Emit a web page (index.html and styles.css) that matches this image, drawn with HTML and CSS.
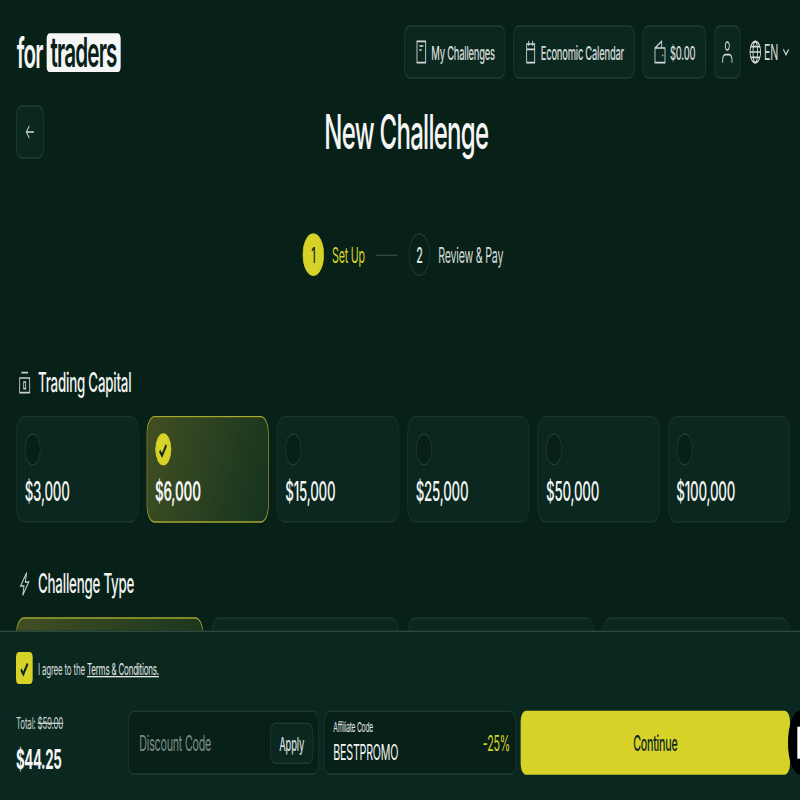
FILE: index.html
```html
<!DOCTYPE html>
<html lang="en">
<head>
  <meta charset="UTF-8">
  <title>New Challenge</title>
  <link rel="stylesheet" href="styles.css">
</head>
<body>
  <div class="page">
    <!-- Top navigation -->
    <header class="topbar">
      <div class="logo">for <span class="logo-box">traders</span></div>
      <nav class="nav">
        <a class="nav-btn">
          <svg class="icon" viewBox="0 0 20 20"><path d="M3.500 2h13v16h-13z M7 5.500h6 M7 8.500h3.500"/></svg>
          My Challenges
        </a>
        <a class="nav-btn">
          <svg class="icon" viewBox="0 0 20 20"><path d="M4 4h12v14H4z M4 8h12 M7 1.500v4 M13 1.500v4"/></svg>
          Economic Calendar
        </a>
        <a class="nav-btn">
          <svg class="icon" viewBox="0 0 20 20"><path d="M2.500 7h15v11h-15z M2.500 7l10-5v5 M13.500 12.500h1.500"/></svg>
          $0.00
        </a>
        <a class="nav-btn nav-btn-icon">
          <svg class="icon" viewBox="0 0 20 20"><circle cx="10" cy="5.500" r="3"/><path d="M3 18v-2a4 4 0 0 1 4-4h6a4 4 0 0 1 4 4v2"/></svg>
        </a>
        <div class="lang">
          <svg class="icon" viewBox="0 0 20 20"><circle cx="10" cy="10" r="8"/><ellipse cx="10" cy="10" rx="3.500" ry="8"/><path d="M2 10h16 M3 6h14 M3 14h14"/></svg>
          EN
          <svg class="chevron" viewBox="0 0 12 12"><path d="M2 4l4 4 4-4"/></svg>
        </div>
      </nav>
    </header>

    <div class="title-row">
      <a class="back-btn">
        <svg class="back-icon" viewBox="0 0 16 16"><path d="M14 8H2.500 M7 3.500L2.500 8 7 12.500"/></svg>
      </a>
      <h1>New Challenge</h1>
    </div>

    <div class="stepper">
      <span class="step-num step-num-active">1</span>
      <span class="step-label step-label-active">Set Up</span>
      <span class="step-line"></span>
      <span class="step-num">2</span>
      <span class="step-label">Review &amp; Pay</span>
    </div>

    <section class="capital">
      <h2 class="section-title">
        <svg class="section-icon" viewBox="0 0 20 20"><path d="M5 2.500h10 M2.500 6.500h15v11h-15z M8.500 9.500h3v5h-3z"/></svg>
        Trading Capital
      </h2>
      <div class="capital-grid">
        <div class="card"><span class="radio"></span><span class="price">$3,000</span></div>
        <div class="card card-selected">
          <span class="radio radio-on"><svg viewBox="0 0 12 12"><path d="M2 6.500l2.800 2.800L10 3"/></svg></span>
          <span class="price price-selected">$6,000</span>
        </div>
        <div class="card"><span class="radio"></span><span class="price">$15,000</span></div>
        <div class="card"><span class="radio"></span><span class="price">$25,000</span></div>
        <div class="card"><span class="radio"></span><span class="price">$50,000</span></div>
        <div class="card"><span class="radio"></span><span class="price">$100,000</span></div>
      </div>
    </section>

    <section class="type">
      <h2 class="section-title">
        <svg class="section-icon" viewBox="0 0 20 20"><path d="M13 1.500L4 11.500h5L7 18.500l9-10h-5z"/></svg>
        Challenge Type
      </h2>
      <div class="type-grid">
        <div class="card type-card card-selected"></div>
        <div class="card type-card"></div>
        <div class="card type-card"></div>
        <div class="card type-card"></div>
      </div>
    </section>

    <footer class="checkout">
      <div class="agree">
        <span class="checkbox"><svg viewBox="0 0 12 12"><path d="M2 6.500l2.800 2.800L10 3"/></svg></span>
        <span>I agree to the <a class="terms">Terms &amp; Conditions.</a></span>
      </div>
      <div class="checkout-row">
        <div class="total">
          <div class="total-old">Total: <s>$59.00</s></div>
          <div class="total-new">$44.25</div>
        </div>
        <div class="field discount">
          <span class="placeholder">Discount Code</span>
          <button class="apply">Apply</button>
        </div>
        <div class="field affiliate">
          <div class="affiliate-text">
            <div class="affiliate-label">Affiliate Code</div>
            <div class="affiliate-code">BESTPROMO</div>
          </div>
          <span class="affiliate-off">-25%</span>
        </div>
        <button class="continue">Continue</button>
      </div>
      <div class="chat-widget"><span class="chat-mark"></span></div>
    </footer>
  </div>
</body>
</html>
```

FILE: styles.css
```css
/* Page is laid out at 1200x600 and squeezed into the 800x800 window */
html, body {
  margin: 0;
  padding: 0;
  height: 800px;
  overflow: hidden;
  background: #072119;
}

.page {
  position: relative;
  width: 1200px;
  height: 600px;
  padding: 19px 15px 0 24px;
  box-sizing: border-box;
  overflow: hidden;
  transform: scale(0.66666, 1.33333);
  transform-origin: 0 0;
  font-family: Inter, "Liberation Sans", sans-serif;
  letter-spacing: -0.02em;
  color: #f2f4f3;
}

/* Top bar */
.topbar {
  display: flex;
  justify-content: space-between;
  align-items: center;
  height: 40px;
}

.logo {
  font-size: 31px;
  font-weight: 600;
  color: #f5f6f5;
  display: flex;
  align-items: center;
  gap: 6px;
  margin-left: 1px;
  letter-spacing: -0.04em;
}

.logo-box {
  background: #f5f6f5;
  color: #072119;
  border-radius: 4px;
  padding: 0 6px;
  height: 29px;
  line-height: 27px;
}

.nav {
  display: flex;
  align-items: center;
  gap: 12px;
}

.nav-btn {
  display: flex;
  align-items: center;
  gap: 5px;
  height: 40px;
  padding: 0 15px;
  box-sizing: border-box;
  background: #0a2820;
  border: 1px solid #223d34;
  border-radius: 8px;
  font-size: 14px;
  font-weight: 500;
  color: #d5dad7;
  white-space: nowrap;
}

.nav-btn-icon {
  padding: 0 9px;
}

.icon {
  width: 20px;
  height: 20px;
  flex: none;
  fill: none;
  stroke: #d5dad7;
  stroke-width: 1.3;
}

.lang {
  display: flex;
  align-items: center;
  gap: 3px;
  font-size: 16px;
  color: #d5dad7;
}

.chevron {
  width: 12px;
  height: 12px;
  margin-left: 3px;
  fill: none;
  stroke: #d5dad7;
  stroke-width: 1.3;
}

/* Title */
.title-row {
  position: relative;
  display: flex;
  justify-content: center;
  align-items: center;
  height: 40px;
  margin-top: 20px;
  padding-left: 10px;
}

.back-btn {
  position: absolute;
  left: 0;
  top: 0;
  width: 42px;
  height: 40px;
  box-sizing: border-box;
  display: flex;
  align-items: center;
  justify-content: center;
  background: #0a2820;
  border: 1px solid #223d34;
  border-radius: 8px;
}

.back-icon {
  width: 16px;
  height: 16px;
  fill: none;
  stroke: #d5dad7;
  stroke-width: 1.2;
}

h1 {
  margin: 0;
  font-size: 36px;
  font-weight: 500;
  letter-spacing: -0.03em;
  color: #f5f6f5;
}

/* Stepper */
.stepper {
  display: flex;
  justify-content: center;
  align-items: center;
  gap: 12px;
  height: 32px;
  margin-top: 56px;
  font-size: 16px;
}

.step-num {
  width: 32px;
  height: 32px;
  box-sizing: border-box;
  border: 1px solid #223d34;
  border-radius: 50%;
  display: flex;
  align-items: center;
  justify-content: center;
  font-weight: 500;
  color: #e4e7e5;
}

.step-num-active {
  background: #d6d228;
  border-color: #d6d228;
  color: #0a2820;
}

.step-label {
  color: #d5dad7;
}

.step-label-active {
  color: #d6d228;
}

.step-line {
  width: 32px;
  height: 1px;
  margin: 0 5px;
  background: #2c4a3f;
}

/* Sections */
.section-title {
  display: flex;
  align-items: center;
  gap: 10px;
  margin: 0;
  height: 24px;
  font-size: 20px;
  font-weight: 500;
  color: #f2f4f3;
}

.section-icon {
  width: 20px;
  height: 20px;
  margin-left: 3px;
  fill: none;
  stroke: #c9cfcb;
  stroke-width: 1.3;
}

.capital {
  margin-top: 68px;
}

.capital-grid {
  display: grid;
  grid-template-columns: repeat(6, 1fr);
  gap: 12px;
  margin-top: 13px;
}

.card {
  height: 80px;
  box-sizing: border-box;
  padding: 12px 12px 0;
  background: #0a2820;
  border: 1px solid #1a352c;
  border-radius: 12px;
}

.card-selected {
  background: linear-gradient(115deg, #424f22, #14331f);
  border-color: #a8aa2e;
}

.radio {
  display: flex;
  align-items: center;
  justify-content: center;
  width: 24px;
  height: 24px;
  box-sizing: border-box;
  background: #072119;
  border: 1px solid #223d34;
  border-radius: 50%;
}

.radio-on {
  background: #d6d228;
  border-color: #d6d228;
}

.radio svg,
.checkbox svg {
  width: 15px;
  height: 15px;
  fill: none;
  stroke: #0a2820;
  stroke-width: 2;
}

.price {
  display: block;
  margin-top: 8px;
  font-size: 20px;
  font-weight: 500;
  line-height: 24px;
  color: #f5f6f5;
}

.price-selected {
  font-weight: 600;
}

.type {
  margin-top: 34px;
}

.type-grid {
  display: grid;
  grid-template-columns: repeat(4, 1fr);
  gap: 12px;
  margin-top: 13px;
}

.type-card {
  height: 120px;
}

/* Checkout bar */
.checkout {
  position: absolute;
  left: 0;
  right: 0;
  top: 473px;
  height: 127px;
  box-sizing: border-box;
  padding: 15px 15px 0 24px;
  background: #0a2820;
  border-top: 1px solid #2c4a3f;
}

.agree {
  display: flex;
  align-items: center;
  gap: 8px;
  height: 24px;
  font-size: 12px;
  color: #d5dad7;
}

.checkbox {
  display: flex;
  align-items: center;
  justify-content: center;
  width: 25px;
  height: 24px;
  background: #d6d228;
  border-radius: 4px;
}

.terms {
  color: #e4e7e5;
  text-decoration: underline;
}

.checkout-row {
  display: flex;
  gap: 8px;
  height: 48px;
  margin-top: 20px;
}

.total {
  width: 160px;
  flex: none;
}

.total-old {
  margin-top: 2px;
  font-size: 12px;
  line-height: 16px;
  color: #c9cfcb;
}

.total-new {
  margin-top: 8px;
  font-size: 20px;
  font-weight: 700;
  line-height: 22px;
  letter-spacing: -0.03em;
  color: #f5f6f5;
}

.field {
  display: flex;
  align-items: center;
  justify-content: space-between;
  box-sizing: border-box;
  height: 48px;
  background: #072119;
  border: 1px solid #1f3a31;
  border-radius: 8px;
}

.discount {
  width: 286px;
  flex: none;
  padding: 0 7px 0 16px;
}

.placeholder {
  font-size: 16px;
  color: #7e8b85;
}

.apply {
  width: 65px;
  height: 31px;
  background: #0a2820;
  border: 1px solid #223d34;
  border-radius: 8px;
  font: 500 14px Inter, "Liberation Sans", sans-serif;
  letter-spacing: -0.02em;
  color: #d5dad7;
}

.affiliate {
  width: 288px;
  flex: none;
  padding: 0 8px 0 13px;
}

.affiliate-text {
  margin-bottom: 4px;
}

.affiliate-label {
  font-size: 10px;
  line-height: 14px;
  color: #e4e7e5;
}

.affiliate-code {
  margin-top: 3px;
  font-size: 16px;
  line-height: 18px;
  color: #f2f4f3;
}

.affiliate-off {
  font-size: 16px;
  color: #d6d228;
}

.continue {
  flex: 1;
  margin-left: -1px;
  height: 48px;
  background: #d6d228;
  border: none;
  border-radius: 8px;
  font: 500 16px Inter, "Liberation Sans", sans-serif;
  letter-spacing: -0.02em;
  color: #0a2820;
}

/* Chat launcher, only its left edge is in the window */
.chat-widget {
  position: absolute;
  right: 0;
  top: 59px;
  width: 18px;
  height: 48px;
  background: #000;
  border-radius: 18px 0 0 18px / 24px 0 0 24px;
}

.chat-mark {
  position: absolute;
  right: 0;
  top: 12px;
  width: 4px;
  height: 24px;
  background: #fff;
}
```
